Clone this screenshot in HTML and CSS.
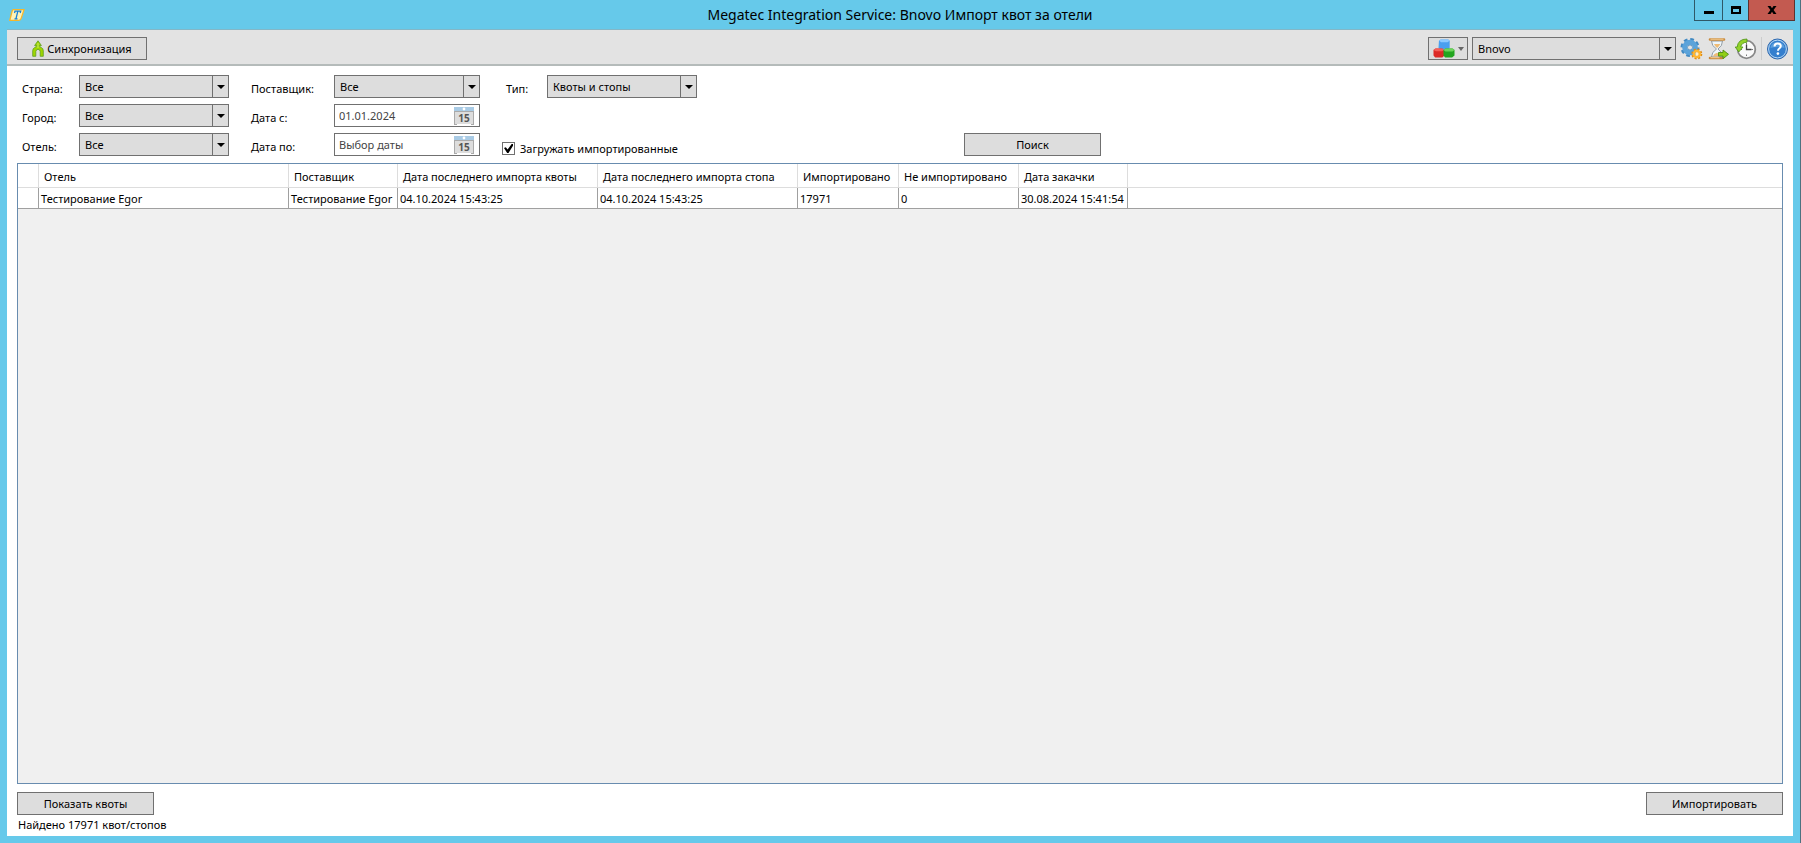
FILE: index.html
```html
<!DOCTYPE html>
<html lang="ru">
<head>
<meta charset="utf-8">
<title>Megatec Integration Service: Bnovo Импорт квот за отели</title>
<link rel="stylesheet" href="styles.css">
</head>
<body>
<div class="window">
  <header class="titlebar">
    <svg class="app-icon" viewBox="0 0 16 12" aria-hidden="true">
      <path d="M4.2.7H15L12.2 9.4Q11.600 11.300 9.800 11.300H.8L3 2.600Q3.400 1 4.200.7Z" fill="#fff3b8" stroke="#f5b72c" stroke-width="1.300"/>
      <path d="M5.500 4 6 2.200h5.700l-.5 1.800M8.800 2.300 7 9.700M5.500 9.800h3" fill="none" stroke="#1681d8" stroke-width="1.300"/>
    </svg>
    <h1 class="title">Megatec Integration Service: Bnovo Импорт квот за отели</h1>
    <div class="window-controls">
      <button class="win-btn win-min" type="button" aria-label="Свернуть"><svg viewBox="0 0 12 12"><path d="M1 7h10v3H1z"/></svg></button>
      <button class="win-btn win-max" type="button" aria-label="Развернуть"><svg viewBox="0 0 12 12"><path d="M1 2h10v8H1zM3 5v3h6V5z" fill-rule="evenodd"/></svg></button>
      <button class="win-btn win-close" type="button" aria-label="Закрыть"><svg viewBox="0 0 12 12"><path d="M1.500 2h3L6 4.300 7.500 2h3L7.600 6l2.900 4h-3L6 7.700 4.500 10h-3L4.400 6z"/></svg></button>
    </div>
  </header>

  <div class="client">
    <div class="toolbar">
      <button class="btn btn-sync" type="button">
        <svg class="sync-icon" viewBox="0 0 12 17" aria-hidden="true"><path d="M.7 16.300v-5.500q0-2.400 2-3.300Q4.700 6.700 4.700 5.500H2.600L6 .8l3.400 4.700H7.300q0 1.200 2 2 2 .9 2 3.300v5.500H8.200v-4.800Q8 9.600 6 9.300q-2 .3-2.200 2.200v4.800z" fill="#9ed600" stroke="#5f9e20" stroke-width=".8"/><path d="M6 3v5" stroke="#d5f27a" stroke-width=".8"/></svg>
        Синхронизация
      </button>
      <div class="tools">
        <button class="btn btn-cubes" type="button" aria-label="Модули">
          <svg class="cubes-icon" viewBox="0 0 22 19" aria-hidden="true">
            <path d="m6 1.500 1.800-1h7.400l1.500 1.300v7.200l-1.500 1.500H7.500L5.500 9z" fill="#4a9ff0"/><path d="m6 1.500 1.800-1h7.400l1.500 1.300-2.200 1.400H8z" fill="#8dcaff"/>
            <path d="m.5 11 2-1.500h6.800L11 11v6l-1.700 1.500H2.200L.5 16.500z" fill="#dc2a26"/><path d="m.5 11 2-1.500h6.800L11 11l-2 1.200H3z" fill="#f4605a"/>
            <path d="m10.500 11 2-1.500h7l2 1.500v5.500l-2.400 2h-7l-1.600-2z" fill="#23a51f"/><path d="m10.500 11 2-1.500h7l2 1.500-2 1.400h-7z" fill="#6cd45a"/>
          </svg>
          <svg class="small-arrow" viewBox="0 0 6 4" aria-hidden="true"><path d="M0 0h6L3 4z"/></svg>
        </button>
        <span class="combo combo-service"><select aria-label="Сервис"><option>Bnovo</option></select></span>
        <button class="tool" type="button" aria-label="Настройки">
          <svg viewBox="0 0 22 22"><circle cx="9.500" cy="9.500" r="8" fill="none" stroke="#4189c2" stroke-width="3" stroke-dasharray="3.600 2.683"/><circle cx="9.500" cy="9.500" r="5.300" fill="none" stroke="#5ba3da" stroke-width="5"/><circle cx="9.500" cy="9.500" r="2.500" fill="#e3e3e3" stroke="#347fb9" stroke-width=".7"/><circle cx="16.300" cy="16" r="4.500" fill="none" stroke="#df8c17" stroke-width="2" stroke-dasharray="2 1.534"/><circle cx="16.300" cy="16" r="3" fill="none" stroke="#ffb632" stroke-width="2.600"/><circle cx="16.300" cy="16" r="1.500" fill="#fff0c9"/></svg>
        </button>
        <button class="tool" type="button" aria-label="Очередь">
          <svg viewBox="0 0 22 22"><path d="M4 3q0 5 5 8-5 3-5 8h11q0-5-4.500-8Q15 8 15 3z" fill="#eef6fb" stroke="#929ba2"/><path d="M6.500 6h6.300q-.8 2-3.100 4Q7 8 6.500 6M5.500 18q.8-2.500 4-3.300 3 .8 4 3.300z" fill="#eebc78"/><path d="M2.500 1.500h14M2.500 20h12" stroke="#c88a3d" stroke-width="2.600" stroke-linecap="round"/><path d="M3 1.200h13M3 19.700h9" stroke="#f6cf95"/><path d="M11 14.500h4.500V12l5.500 4.300-5.500 4.500v-2.700H11z" fill="#91cf16" stroke="#4f8c15" stroke-width=".9"/></svg>
        </button>
        <button class="tool" type="button" aria-label="История">
          <svg viewBox="0 0 22 22"><circle cx="12" cy="11.500" r="8.800" fill="#fafafa" stroke="#888" stroke-width="1.800"/><path d="M12 5v1.500M12 16.500V18M17 11.500h1.500M6 11.500h1.500" stroke="#777"/><path d="M12 6.500v5h5" fill="none" stroke="#444" stroke-width="1.300"/><path d="M12.500 1Q3.500 1 2.700 9H.7L4.300 14l4.200-5H6.200q.8-4.500 6.300-4.800z" fill="#92d22b" stroke="#4e9316" stroke-width=".8"/></svg>
        </button>
        <span class="tool-separator"></span>
        <button class="tool" type="button" aria-label="Справка">
          <svg viewBox="0 0 22 22"><circle cx="11" cy="11" r="10" fill="#347fce" stroke="#2f68ad"/><circle cx="11" cy="11" r="8.900" fill="none" stroke="#b8d8f4"/><path d="M4 10a7 6 0 0 1 14 0q-7-2-14 0" fill="#5a9edd"/><path d="M8 8.400q0-3 3.100-3 3.200 0 3.200 2.700 0 1.500-1.500 2.400-1.300.8-1.300 2.200" fill="none" stroke="#fff" stroke-width="2"/><circle cx="11.400" cy="15.600" r="1.300" fill="#fff"/></svg>
        </button>
      </div>
    </div>

    <form class="filters">
      <div class="group group-place">
        <label for="country">Страна:</label><span class="combo"><select id="country"><option>Все</option></select></span>
        <label for="city">Город:</label><span class="combo"><select id="city"><option>Все</option></select></span>
        <label for="hotel">Отель:</label><span class="combo"><select id="hotel"><option>Все</option></select></span>
      </div>
      <div class="group group-supplier">
        <label for="supplier">Поставщик:</label><span class="combo"><select id="supplier"><option>Все</option></select></span>
        <label for="from">Дата с:</label>
        <span class="date"><input id="from" type="text" value="01.01.2024"><button type="button" aria-label="Календарь"><svg viewBox="0 0 20 18"><path d="M0 0h20v17H0z" fill="#ddd"/><path d="M0 0h20v4H0z" fill="#a9cbe5"/><path d="M0 4.500h20M.5 4v13.500M19.500 4v13.500M0 17.500h3M17 17.500h3" stroke="#aaa"/><circle cx="10" cy="2" r="1.400" fill="#fff"/><text class="day" x="10" y="15">15</text></svg></button></span>
        <label for="to">Дата по:</label>
        <span class="date"><input id="to" type="text" placeholder="Выбор даты"><button type="button" aria-label="Календарь"><svg viewBox="0 0 20 18"><path d="M0 0h20v17H0z" fill="#ddd"/><path d="M0 0h20v4H0z" fill="#a9cbe5"/><path d="M0 4.500h20M.5 4v13.500M19.500 4v13.500M0 17.500h3M17 17.500h3" stroke="#aaa"/><circle cx="10" cy="2" r="1.400" fill="#fff"/><text class="day" x="10" y="15">15</text></svg></button></span>
      </div>
      <div class="group group-type">
        <label class="type-label" for="type">Тип:</label><span class="combo"><select id="type"><option>Квоты и стопы</option></select></span>
        <label class="check"><input type="checkbox" checked>Загружать импортированные</label>
      </div>
      <button class="btn btn-wide btn-search" type="button">Поиск</button>
    </form>

    <main class="grid-panel">
      <table class="quotas">
        <colgroup><col class="c-mark"><col class="c-hotel"><col class="c-supplier"><col class="c-date"><col class="c-date"><col class="c-done"><col class="c-left"><col class="c-load"><col></colgroup>
        <thead>
          <tr><th></th><th>Отель</th><th>Поставщик</th><th>Дата последнего импорта квоты</th><th>Дата последнего импорта стопа</th><th>Импортировано</th><th>Не импортировано</th><th>Дата закачки</th><th></th></tr>
        </thead>
        <tbody>
          <tr><td></td><td>Тестирование Egor</td><td>Тестирование Egor</td><td>04.10.2024 15:43:25</td><td>04.10.2024 15:43:25</td><td>17971</td><td>0</td><td>30.08.2024 15:41:54</td><td></td></tr>
        </tbody>
      </table>
    </main>

    <footer class="footer">
      <div class="actions">
        <button class="btn btn-wide" type="button">Показать квоты</button>
        <button class="btn btn-wide" type="button">Импортировать</button>
      </div>
      <p class="status">Найдено 17971 квот/стопов</p>
    </footer>
  </div>
</div>
</body>
</html>
```
FILE: styles.css
```css
* { box-sizing: border-box; }

body {
  margin: 0;
  font: 11px/16px "Noto Sans", "Open Sans", sans-serif;
  color: #000;
}

button, input, select { font: inherit; color: inherit; }
svg { display: block; }

.window {
  display: flex;
  flex-direction: column;
  height: 100vh;
  padding: 0 7px 7px;
  background: #66c9ea;
  border-right: 1px solid #4d7280;
}

.titlebar {
  position: relative;
  display: flex;
  align-items: center;
  height: 29px;
}
.app-icon { width: 16px; height: 12px; margin-left: 2px; }
.title {
  flex: 1;
  margin: 0 18px 0 0;
  font-size: 14px;
  line-height: 20px;
  font-weight: 400;
  text-align: center;
}
.window-controls {
  position: absolute;
  top: 0;
  right: -2px;
  display: flex;
}
.win-btn {
  display: grid;
  place-items: center;
  width: 26px;
  height: 21px;
  padding: 0;
  background: #66c9ea;
  border: solid #2f5867;
  border-width: 0 0 1px 1px;
}
.win-btn svg { width: 12px; height: 12px; }
.win-min { width: 28px; }
.win-close { width: 47px; background: #c35a50; border-color: #5c332f; border-right-width: 1px; }

.client {
  flex: 1;
  display: flex;
  flex-direction: column;
  min-height: 0;
  background: #fff;
  border-top: 1px solid #83b7c7;
}

.toolbar {
  display: flex;
  align-items: center;
  justify-content: space-between;
  height: 36px;
  padding: 3px 4px 0 10px;
  background: #e3e3e3;
  border-bottom: 2px solid #b5bbba;
}
.tools { display: flex; align-items: center; gap: 4px; }

.btn {
  display: flex;
  align-items: center;
  justify-content: center;
  height: 23px;
  padding: 0;
  background: #ddd;
  border: 1px solid #707070;
}
.btn-sync { width: 130px; gap: 3px; }
.sync-icon { width: 12px; height: 17px; }
.btn-wide { width: 137px; }
.btn-cubes { width: 40px; gap: 3px; }
.cubes-icon { width: 22px; height: 19px; }
.small-arrow { width: 6px; height: 4px; fill: #666; }

.combo { position: relative; display: block; height: 23px; }
.combo select {
  appearance: none;
  display: block;
  width: 100%;
  height: 23px;
  padding: 0 20px 0 5px;
  background: #ddd;
  border: 1px solid #707070;
  border-radius: 0;
}
.combo::before {
  content: "";
  position: absolute;
  top: 0;
  right: 16px;
  width: 1px;
  height: 100%;
  background: #707070;
}
.combo::after {
  content: "";
  position: absolute;
  top: 10px;
  right: 4px;
  border: solid transparent;
  border-width: 4px 4px 0;
  border-top-color: #000;
  pointer-events: none;
}
.combo-service { width: 204px; }

.tool { width: 23px; height: 22px; padding: 0; border: 0; background: none; }
.tool svg { width: 23px; height: 22px; }
.tool-separator { width: 1px; height: 23px; background: #ccc; }

.filters {
  display: flex;
  gap: 22px;
  padding: 9px 10px 7px 15px;
}
.group {
  display: grid;
  grid-auto-rows: 23px;
  row-gap: 6px;
}
.group label { padding-top: 6px; white-space: nowrap; }
.group-place { grid-template-columns: 57px 150px; }
.group-supplier { grid-template-columns: 83px 146px; }
.group-type { grid-template-columns: 45px 150px; }
.group .type-label { padding-left: 4px; }
.group .check {
  grid-column: 1 / -1;
  grid-row: 3;
  display: flex;
  align-items: center;
  gap: 5px;
  padding-top: 8px;
}
.check input {
  appearance: none;
  flex: none;
  width: 13px;
  height: 13px;
  margin: 0;
  border: 1px solid #707070;
  background: #fff;
}
.check input:checked::before {
  content: "";
  display: block;
  width: 9px;
  height: 9px;
  margin: 1px;
  background: #000;
  clip-path: polygon(0 45%, 20% 35%, 40% 62%, 85% 0, 100% 0, 100% 20%, 50% 100%, 35% 100%);
}

.date {
  display: flex;
  align-items: center;
  background: #fff;
  border: 1px solid #707070;
}
.date input {
  flex: 1;
  min-width: 0;
  padding: 0 4px;
  border: 0;
  color: #444;
  background: none;
}
.date input::placeholder { color: #444; opacity: 1; }
.date button { width: 20px; height: 18px; margin-right: 5px; padding: 0; border: 0; background: none; }
.date svg { width: 20px; height: 18px; }
.day { font: 700 10px "Open Sans", sans-serif; fill: #555; text-anchor: middle; }

.btn-search { align-self: flex-end; margin-left: 245px; }

.grid-panel {
  flex: 1;
  min-height: 0;
  margin: 0 10px;
  overflow: hidden;
  background: #f0f0f0;
  border: 1px solid #688caf;
}
.quotas {
  width: 100%;
  table-layout: fixed;
  border-collapse: separate;
  border-spacing: 0;
  background: #fff;
}
.c-mark { width: 21px; }
.c-hotel { width: 250px; }
.c-supplier, .c-load { width: 109px; }
.c-date { width: 200px; }
.c-done { width: 101px; }
.c-left { width: 120px; }
.quotas th, .quotas td {
  padding: 2px 0 0;
  text-align: left;
  font-weight: 400;
  white-space: nowrap;
}
.quotas th { height: 24px; padding-left: 5px; border-right: 1px solid #ddd; border-bottom: 1px solid #ddd; }
.quotas td { height: 21px; padding-left: 2px; border-right: 1px solid #a0a0a0; border-bottom: 1px solid #a0a0a0; }
.quotas th:last-child, .quotas td:last-child { border-right: 0; }

.footer { padding: 8px 10px 3px; }
.actions { display: flex; justify-content: space-between; }
.status { margin: 2px 0 0; padding-left: 1px; }
```
